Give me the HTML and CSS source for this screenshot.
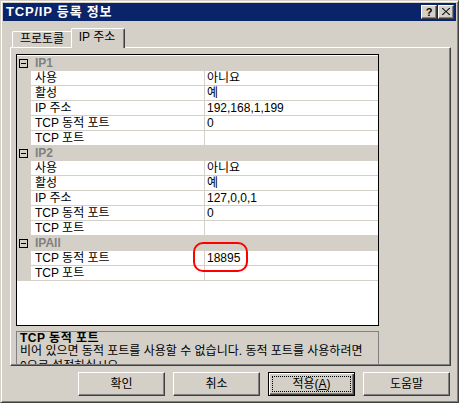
FILE: index.html
```html
<!DOCTYPE html>
<html lang="ko">
<head>
<meta charset="utf-8">
<title>TCP/IP 등록 정보</title>
<link rel="stylesheet" href="styles.css">
</head>
<body>
<div class="window">
  <div class="titlebar">
    <span class="title">TCP/IP 등록 정보</span>
    <div class="tb-buttons">
      <span class="tb-btn help">?</span>
      <span class="tb-btn close"><svg width="8" height="7" viewBox="0 0 8 7"><path d="M0 0 L1 0 L4 3 L7 0 L8 0 L8 0.5 L4.7 3.5 L8 6.5 L8 7 L7 7 L4 4 L1 7 L0 7 L0 6.5 L3.3 3.5 L0 0.5 Z" fill="#000"/></svg></span>
    </div>
  </div>
  <div class="body">
    <div class="tabs">
      <div class="tab">프로토콜</div>
      <div class="tab active">IP 주소</div>
    </div>
    <div class="panel">
      <div class="grid">
        <div class="cat"><span class="gutter"><span class="toggle"></span></span><span class="cat-label">IP1</span></div>
        <div class="row"><span class="gutter"></span><span class="name">사용</span><span class="value">아니요</span></div>
        <div class="row"><span class="gutter"></span><span class="name">활성</span><span class="value">예</span></div>
        <div class="row"><span class="gutter"></span><span class="name">IP 주소</span><span class="value">192,168,1,199</span></div>
        <div class="row"><span class="gutter"></span><span class="name">TCP 동적 포트</span><span class="value">0</span></div>
        <div class="row"><span class="gutter"></span><span class="name">TCP 포트</span><span class="value"></span></div>
        <div class="cat"><span class="gutter"><span class="toggle"></span></span><span class="cat-label">IP2</span></div>
        <div class="row"><span class="gutter"></span><span class="name">사용</span><span class="value">아니요</span></div>
        <div class="row"><span class="gutter"></span><span class="name">활성</span><span class="value">예</span></div>
        <div class="row"><span class="gutter"></span><span class="name">IP 주소</span><span class="value">127,0,0,1</span></div>
        <div class="row"><span class="gutter"></span><span class="name">TCP 동적 포트</span><span class="value">0</span></div>
        <div class="row"><span class="gutter"></span><span class="name">TCP 포트</span><span class="value"></span></div>
        <div class="cat"><span class="gutter"><span class="toggle"></span></span><span class="cat-label">IPAll</span></div>
        <div class="row"><span class="gutter"></span><span class="name">TCP 동적 포트</span><span class="value marked">18895<span class="mark"></span></span></div>
        <div class="row"><span class="gutter"></span><span class="name">TCP 포트</span><span class="value"></span></div>
      </div>
      <div class="desc">
        <div class="desc-title">TCP 동적 포트</div>
        <div class="desc-text">비어 있으면 동적 포트를 사용할 수 없습니다. 동적 포트를 사용하려면 0으로 설정하십시오.</div>
      </div>
    </div>
    <div class="buttons">
      <button class="btn"><span class="btn-inner">확인</span></button>
      <button class="btn"><span class="btn-inner">취소</span></button>
      <button class="btn default"><span class="btn-inner focus">적용(<u>A</u>)</span></button>
      <button class="btn"><span class="btn-inner">도움말</span></button>
    </div>
  </div>
</div>
</body>
</html>
```
FILE: styles.css
```css
* { box-sizing: border-box; }
html, body { margin: 0; padding: 0; background: #d4d0c8; }
body {
  font-family: "Liberation Sans", "Noto Sans CJK KR", sans-serif;
  font-size: 12px;
  color: #000;
}
.window {
  width: 459px;
  height: 403px;
  border: 1px solid;
  border-color: #d4d0c8 #404040 #404040 #d4d0c8;
  box-shadow: inset 1px 1px #fff, inset -1px -1px #808080;
  padding: 2px;
  background: #d4d0c8;
  display: flex;
  flex-direction: column;
}
.titlebar {
  height: 18px;
  background: #0a246a;
  display: flex;
  align-items: center;
  justify-content: space-between;
  padding: 0 2px 0 3px;
}
.title {
  color: #fff;
  font-weight: bold;
  font-size: 13px;
  letter-spacing: 0.8px;
  line-height: 18px;
}
.tb-buttons { display: flex; gap: 1px; }
.tb-btn {
  width: 16px;
  height: 14px;
  background: #d4d0c8;
  border: 1px solid;
  border-color: #fff #404040 #404040 #fff;
  box-shadow: inset -1px -1px #808080;
  display: flex;
  align-items: center;
  justify-content: center;
  font-weight: bold;
  font-size: 11px;
  line-height: 12px;
  font-family: "Liberation Sans", sans-serif;
}
.tb-btn.help { padding-bottom: 1px; }
.tb-btn.close svg { display: block; margin: 0 0 1px 0; }

.body {
  flex: 1;
  display: flex;
  flex-direction: column;
  padding: 7px 0 0 7px;
}
.tabs {
  height: 19px;
  display: flex;
  align-items: flex-end;
  padding-left: 2px;
}
.tab {
  height: 16px;
  width: 59px;
  border-top: 1px solid #fff;
  border-left: 1px solid #fff;
  border-top-left-radius: 2px;
  text-align: center;
  line-height: 15px;
}
.tab.active {
  height: 20px;
  width: 54px;
  margin-bottom: -1px;
  position: relative;
  z-index: 1;
  background: #d4d0c8;
  border-right: 1px solid #404040;
  border-top-right-radius: 2px;
  box-shadow: inset -1px 0 #808080;
  line-height: 16px;
  padding-right: 2px;
}
.panel {
  width: 441px;
  height: 319px;
  border: 1px solid;
  border-color: #fff #404040 #404040 #fff;
  box-shadow: inset -1px -1px #808080;
  padding: 6px 0 0 5px;
  display: flex;
  flex-direction: column;
  overflow: hidden;
}
.grid {
  width: 363px;
  height: 272px;
  border: 1px solid #000;
  background: #fff;
  padding-top: 1px;
  display: flex;
  flex-direction: column;
}
.cat, .row {
  display: flex;
  height: 15px;
  flex: none;
}
.cat { background: #d4d0c8; }
.gutter {
  width: 14px;
  flex: none;
  background: #d4d0c8;
  display: flex;
  align-items: center;
}
.toggle {
  width: 9px;
  height: 9px;
  margin-left: 2px;
  border: 1px solid #000;
  display: flex;
  align-items: center;
  justify-content: center;
}
.toggle::after {
  content: "";
  width: 5px;
  height: 1px;
  background: #000;
}
.cat-label {
  padding-left: 4px;
  font-weight: bold;
  color: #808080;
  line-height: 15px;
}
.name, .value {
  line-height: 14px;
  height: 15px;
  border-bottom: 1px solid #d4d0c8;
  white-space: nowrap;
}
.name {
  width: 174px;
  padding-left: 4px;
  border-right: 1px solid #d4d0c8;
}
.value {
  flex: 1;
  padding-left: 2px;
}
.value.marked { position: relative; }
.mark {
  position: absolute;
  left: -12px;
  top: -9px;
  width: 55px;
  height: 30px;
  border: 2px solid #ff0000;
  border-radius: 10px;
}
.desc {
  margin-top: 5px;
  width: 363px;
  height: 33px;
  border: 1px solid #808080;
  border-bottom: none;
  padding-left: 3px;
  overflow: hidden;
}
.desc-title {
  font-weight: bold;
  line-height: 12px;
  letter-spacing: 0.5px;
}
.desc-text {
  line-height: 15px;
  padding-right: 12px;
}
.buttons {
  margin-top: 6px;
  display: flex;
  justify-content: flex-end;
  gap: 8px;
  padding-right: 6px;
}
.btn {
  width: 87px;
  height: 24px;
  padding: 0;
  margin: 0;
  background: #d4d0c8;
  border: 1px solid;
  border-color: #fff #404040 #404040 #fff;
  box-shadow: inset -1px -1px #808080;
  font-family: "Liberation Sans", "Noto Sans CJK KR", sans-serif;
  font-size: 12px;
  color: #000;
  display: flex;
}
.btn.default {
  border: 1px solid #000;
  box-shadow: inset 1px 1px #fff, inset -1px -1px #404040, inset -2px -2px #808080;
}
.btn-inner {
  flex: 1;
  margin: 3px;
  display: flex;
  align-items: center;
  justify-content: center;
  line-height: 14px;
  border: 1px solid transparent;
}
.btn-inner.focus { border: 1px dotted #000; }
.btn-inner u { text-decoration: underline; }
```
